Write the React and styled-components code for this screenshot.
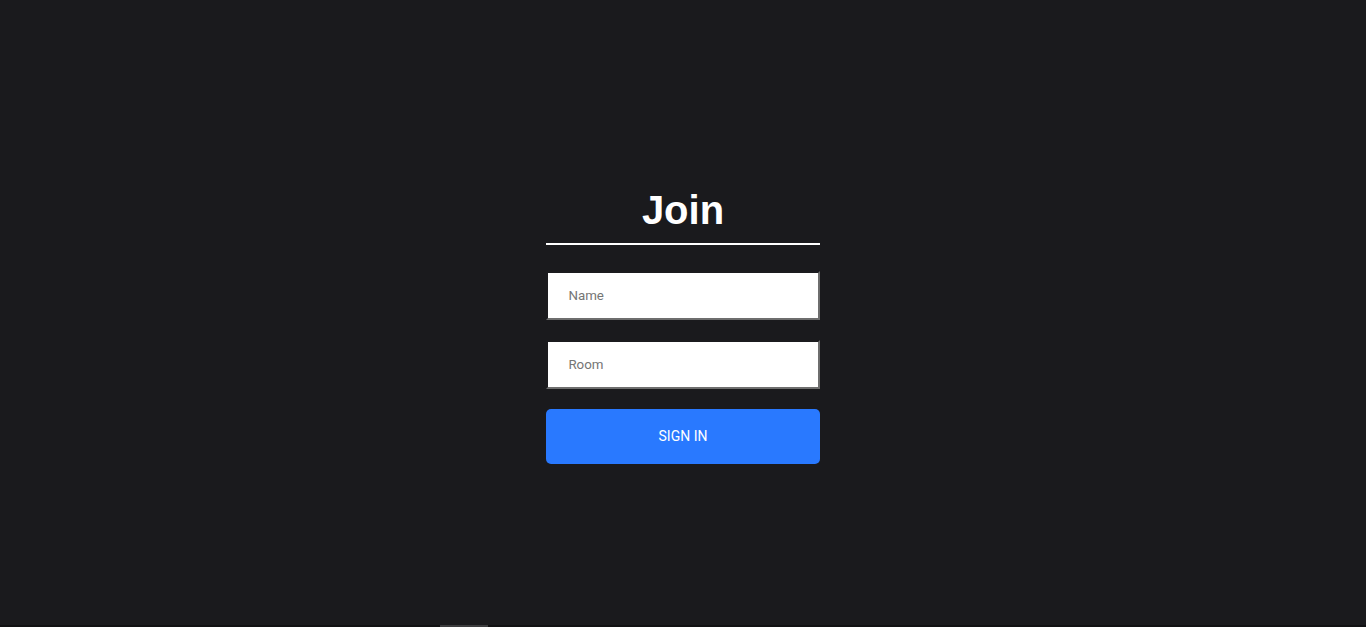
import React from "react";
import styled, { createGlobalStyle } from "styled-components";

const GlobalStyle = createGlobalStyle`
  html,
  body {
    margin: 0;
    padding: 0;
    background: #1a1a1d;
  }

  * {
    box-sizing: border-box;
  }
`;

const OuterContainer = styled.div`
  display: flex;
  justify-content: center;
  align-items: center;
  text-align: center;
  height: calc(100vh - 2px);
  background-color: #1a1a1d;
`;

const InnerContainer = styled.div`
  width: 20%;
`;

const Heading = styled.h1`
  margin: 0.67em 0;
  color: #fff;
  font-family: "Liberation Sans", Arial, sans-serif;
  font-size: 40px;
  font-weight: 700;
  padding-bottom: 10px;
  border-bottom: 2px solid #fff;
`;

const Field = styled.div`
  margin-top: ${(p) => (p.$spaced ? "20px" : "0")};
`;

const JoinInput = styled.input`
  display: block;
  width: 100%;
  border-radius: 0;
  padding: 15px 20px;
  border-style: solid;
  border-width: 2px;
  border-color: #1b1b1e #6e6e6e #6e6e6e #1b1b1e;
  background: #fff;
  font-family: Roboto, "Liberation Sans", sans-serif;
  font-size: 13.33px;
  line-height: normal;
  outline: none;

  &::placeholder {
    color: #757575;
  }
`;

const Button = styled.button`
  display: inline-block;
  width: 100%;
  margin-top: 20px;
  padding: 20px;
  border: none;
  border-radius: 5px;
  background: #2979ff;
  color: #fff;
  text-transform: uppercase;
  font-family: Roboto, "Liberation Sans", sans-serif;
  font-size: 14px;
  line-height: 15px;
  cursor: pointer;
`;

// thin scroll track along the bottom edge
const ScrollTrack = styled.div`
  display: flex;
  height: 2px;
  background: #111113;
`;

const ScrollThumb = styled.div`
  margin-left: 440px;
  width: 48px;
  background: #3c3c3e;
`;

export default function App() {
  return (
    <>
      <GlobalStyle />
      <OuterContainer>
        <InnerContainer>
          <Heading>Join</Heading>
          <Field>
            <JoinInput placeholder="Name" type="text" />
          </Field>
          <Field $spaced>
            <JoinInput placeholder="Room" type="text" />
          </Field>
          <Button type="submit">Sign In</Button>
        </InnerContainer>
      </OuterContainer>
      <ScrollTrack>
        <ScrollThumb />
      </ScrollTrack>
    </>
  );
}
